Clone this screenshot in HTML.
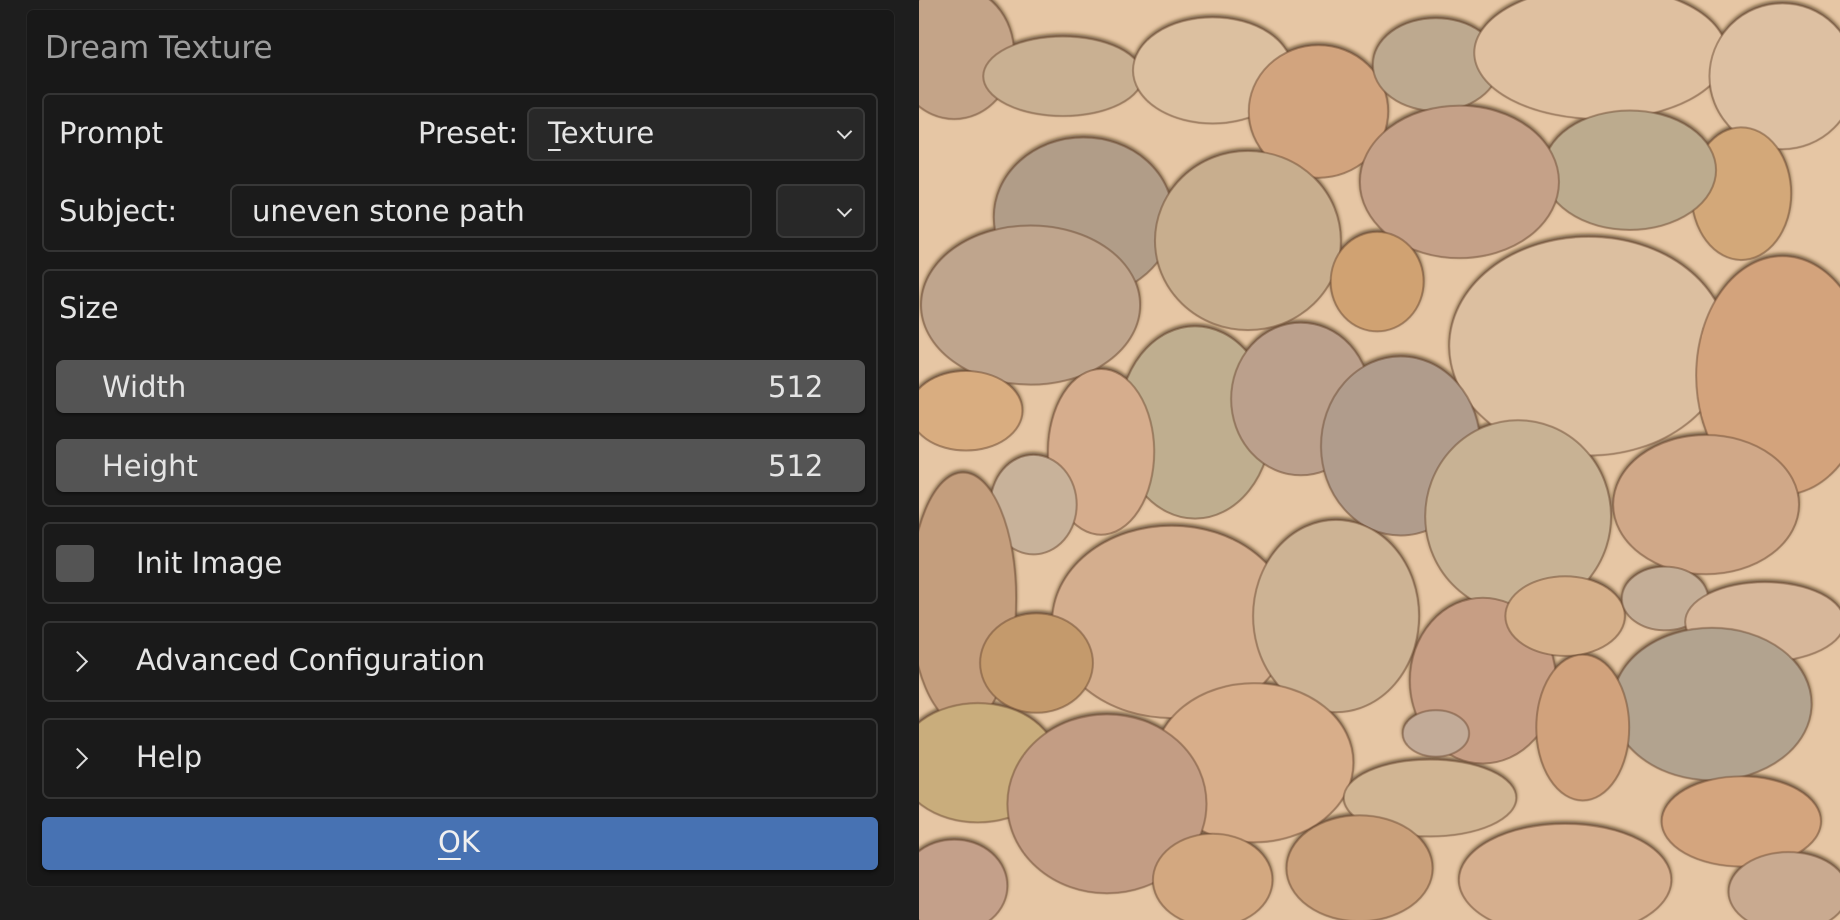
<!DOCTYPE html>
<html><head><meta charset="utf-8"><style>
*{box-sizing:border-box;margin:0;padding:0}
body{width:1840px;height:920px;overflow:hidden;background:#1e1e1e;font-family:"DejaVu Sans","Liberation Sans",sans-serif;color:#e4e4e4;position:relative}
.a{position:absolute}
.panel{left:26px;top:9px;width:869px;height:878px;background:#181818;border:1px solid #262626;border-radius:8px}
.box{position:absolute;left:42px;width:836px;background:#1a1a1a;border:2px solid #343434;border-radius:8px}
.t{position:absolute;font-size:29px;line-height:32px;white-space:nowrap}
.dd{background:#282828;border:2px solid #3a3a3a;border-radius:8px}
.field{background:#1b1b1b;border:2px solid #383838;border-radius:8px}
.sl{background:#545454;border-radius:8px;box-shadow:0 2px 2px #111}
.chev{position:absolute;width:11px;height:11px;border-right:2px solid #ddd;border-bottom:2px solid #ddd;transform:rotate(45deg)}
.rc{position:absolute;width:15px;height:15px;border-right:2px solid #ddd;border-top:2px solid #ddd;transform:rotate(45deg)}
svg ellipse{transform-box:fill-box;transform-origin:center;transform:scale(1.13)}
</style></head><body>
<div class="a panel"></div>
<div class="t" style="left:45px;top:32px;color:#9c9c9c;font-size:31px">Dream Texture</div>

<div class="box" style="top:93px;height:159px"></div>
<div class="t" style="left:59px;top:117px">Prompt</div>
<div class="t" style="left:418px;top:117px">Preset:</div>
<div class="a dd" style="left:527px;top:107px;width:338px;height:54px"></div>
<div class="t" style="left:548px;top:117px"><u style="text-underline-offset:6px">T</u>exture</div>
<div class="chev" style="left:839px;top:126px"></div>
<div class="t" style="left:59px;top:195px">Subject:</div>
<div class="a field" style="left:230px;top:184px;width:522px;height:54px"></div>
<div class="t" style="left:252px;top:195px">uneven stone path</div>
<div class="a dd" style="left:776px;top:184px;width:89px;height:54px"></div>
<div class="chev" style="left:839px;top:204px"></div>

<div class="box" style="top:269px;height:238px"></div>
<div class="t" style="left:59px;top:292px">Size</div>
<div class="a sl" style="left:56px;top:360px;width:809px;height:53px"></div>
<div class="t" style="left:102px;top:371px">Width</div>
<div class="t" style="left:768px;top:371px">512</div>
<div class="a sl" style="left:56px;top:439px;width:809px;height:53px"></div>
<div class="t" style="left:102px;top:450px">Height</div>
<div class="t" style="left:768px;top:450px">512</div>

<div class="box" style="top:522px;height:82px"></div>
<div class="a" style="left:56px;top:545px;width:38px;height:37px;background:#545454;border-radius:6px"></div>
<div class="t" style="left:136px;top:547px">Init Image</div>

<div class="box" style="top:621px;height:81px"></div>
<div class="rc" style="left:70px;top:654px"></div>
<div class="t" style="left:136px;top:644px">Advanced Configuration</div>

<div class="box" style="top:718px;height:81px"></div>
<div class="rc" style="left:70px;top:751px"></div>
<div class="t" style="left:136px;top:741px">Help</div>

<div class="a" style="left:42px;top:817px;width:836px;height:53px;background:#4772b3;border-radius:7px;box-shadow:0 2px 3px #0c0c0c"></div>
<div class="t" style="left:438px;top:826px;color:#f0f0f0"><u style="text-underline-offset:6px">O</u>K</div>

<svg class="a" style="left:919px;top:0" width="921" height="920" viewBox="0 0 1568 1568" preserveAspectRatio="none">
<defs><filter id="s" x="-20%" y="-20%" width="140%" height="140%"><feDropShadow dx="0" dy="-4" stdDeviation="3" flood-color="#3a2616" flood-opacity="0.7"/></filter></defs>
<rect width="1568" height="1568" fill="#e6c6a4"/>
<g filter="url(#s)" stroke="#6b4a32" stroke-opacity="0.5" stroke-width="3">
<ellipse cx="60" cy="90" rx="90" ry="100" fill="#c4a488"/>
<ellipse cx="245" cy="130" rx="120" ry="60" fill="#c9b092"/>
<ellipse cx="500" cy="120" rx="120" ry="80" fill="#dcc0a0"/>
<ellipse cx="680" cy="190" rx="105" ry="100" fill="#d2a47e"/>
<ellipse cx="880" cy="110" rx="95" ry="70" fill="#bda98f"/>
<ellipse cx="1160" cy="90" rx="190" ry="100" fill="#dfc0a0"/>
<ellipse cx="1470" cy="130" rx="110" ry="110" fill="#ddc0a2"/>
<ellipse cx="1400" cy="330" rx="75" ry="100" fill="#d3a879"/>
<ellipse cx="1210" cy="290" rx="130" ry="90" fill="#bcab8e"/>
<ellipse cx="920" cy="310" rx="150" ry="115" fill="#c5a188"/>
<ellipse cx="280" cy="370" rx="135" ry="120" fill="#b19d88"/>
<ellipse cx="560" cy="410" rx="140" ry="135" fill="#c8ae8e"/>
<ellipse cx="780" cy="480" rx="70" ry="75" fill="#d0a272"/>
<ellipse cx="190" cy="520" rx="165" ry="120" fill="#bfa58d"/>
<ellipse cx="1140" cy="590" rx="210" ry="165" fill="#dcbfa0"/>
<ellipse cx="1470" cy="640" rx="130" ry="180" fill="#d3a37c"/>
<ellipse cx="470" cy="720" rx="115" ry="145" fill="#bfae8f"/>
<ellipse cx="650" cy="680" rx="105" ry="115" fill="#bba08c"/>
<ellipse cx="820" cy="760" rx="120" ry="135" fill="#b09c8c"/>
<ellipse cx="310" cy="770" rx="80" ry="125" fill="#d6ad8d"/>
<ellipse cx="195" cy="860" rx="65" ry="75" fill="#c8b29a"/>
<ellipse cx="80" cy="700" rx="85" ry="60" fill="#d9ad80"/>
<ellipse cx="1020" cy="880" rx="140" ry="145" fill="#c8b294"/>
<ellipse cx="1340" cy="860" rx="140" ry="105" fill="#d0a888"/>
<ellipse cx="75" cy="1020" rx="80" ry="190" fill="#c49e7d"/>
<ellipse cx="430" cy="1060" rx="180" ry="145" fill="#d4ae8e"/>
<ellipse cx="710" cy="1050" rx="125" ry="145" fill="#cdb394"/>
<ellipse cx="200" cy="1130" rx="85" ry="75" fill="#c49a6c"/>
<ellipse cx="960" cy="1160" rx="110" ry="125" fill="#c79e84"/>
<ellipse cx="1100" cy="1050" rx="90" ry="60" fill="#d6b08a"/>
<ellipse cx="1270" cy="1020" rx="65" ry="48" fill="#c4ae97"/>
<ellipse cx="1440" cy="1060" rx="120" ry="60" fill="#d7b79a"/>
<ellipse cx="1350" cy="1200" rx="150" ry="115" fill="#b2a38f"/>
<ellipse cx="1130" cy="1240" rx="70" ry="110" fill="#d1a27b"/>
<ellipse cx="570" cy="1300" rx="150" ry="120" fill="#d8ae8a"/>
<ellipse cx="100" cy="1300" rx="120" ry="90" fill="#c9ad7c"/>
<ellipse cx="320" cy="1370" rx="150" ry="135" fill="#c39d84"/>
<ellipse cx="870" cy="1360" rx="130" ry="58" fill="#d1b593"/>
<ellipse cx="880" cy="1250" rx="50" ry="35" fill="#c2ab98"/>
<ellipse cx="1400" cy="1400" rx="120" ry="68" fill="#d4a57e"/>
<ellipse cx="1100" cy="1500" rx="160" ry="85" fill="#d6af8e"/>
<ellipse cx="750" cy="1480" rx="110" ry="80" fill="#caa07a"/>
<ellipse cx="500" cy="1500" rx="90" ry="70" fill="#d3a880"/>
<ellipse cx="60" cy="1510" rx="80" ry="70" fill="#c4a08a"/>
<ellipse cx="1480" cy="1520" rx="90" ry="60" fill="#c9aa90"/>
</g>
</svg>
</body></html>
